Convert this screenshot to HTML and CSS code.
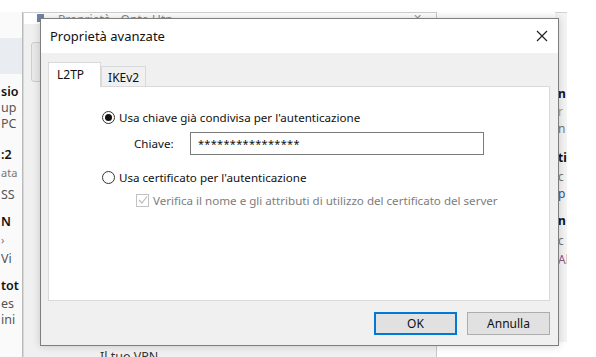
FILE: index.html
```html
<!DOCTYPE html>
<html lang="it">
<head>
    <meta charset="UTF-8">
    <meta name="viewport" content="width=device-width, initial-scale=1.0">
    <title>Proprietà avanzate</title>
    <link rel="stylesheet" href="styles.css">
</head>
<body>
    <div class="desktop">
        <!-- window on the left, mostly hidden -->
        <div class="win-left">
            <div class="left-band"></div>
            <div class="left-text">
                <span class="l-b" style="top: 80px">sio</span>
                <span style="top: 96px">up</span>
                <span style="top: 112px">PC</span>
                <span class="l-b" style="top: 143px">:2</span>
                <span class="l-s" style="top: 161px">ata</span>
                <span style="top: 183px">SS</span>
                <span class="l-b" style="top: 210px">N</span>
                <span class="l-s" style="top: 228px">›</span>
                <span style="top: 247px">Vi</span>
                <span class="l-b" style="top: 274px">tot</span>
                <span style="top: 292px">es</span>
                <span style="top: 308px">ini</span>
            </div>
        </div>

        <!-- window behind the dialog -->
        <div class="win-back">
            <div class="back-title">
                <span class="back-icon"></span>
                <span class="back-name">Proprietà - Onto Utn</span>
                <span class="back-close">✕</span>
            </div>
            <div class="back-tab"></div>
            <div class="back-bottom">Il tuo VPN</div>
        </div>

        <!-- window on the right, mostly hidden -->
        <div class="win-right">
            <span class="r-b" style="top: 81px">n</span>
            <span class="r-y" style="top: 99px">r</span>
            <span style="top: 116px">n</span>
            <span class="r-b" style="top: 145px">ti</span>
            <span style="top: 164px">c</span>
            <span class="r-p" style="top: 181px">p</span>
            <span class="r-b" style="top: 208px">n</span>
            <span style="top: 228px">c</span>
            <span class="r-v" style="top: 247px">Al</span>
        </div>

        <div class="dialog">
            <div class="titlebar">
                <span class="title">Proprietà avanzate</span>
                <span class="close">
                    <svg width="12" height="12" viewBox="0 0 12 12">
                        <path d="M1 1 L11 11 M11 1 L1 11" stroke="#222" stroke-width="1.2" fill="none"/>
                    </svg>
                </span>
            </div>
            <div class="dialog-body">
                <div class="tabs">
                    <div class="tab active">L2TP</div>
                    <div class="tab">IKEv2</div>
                </div>
                <div class="tab-panel">
                    <label class="option">
                        <span class="radio checked"></span>
                        Usa chiave già condivisa per l'autenticazione
                    </label>
                    <div class="key-row">
                        <span class="key-label">Chiave:</span>
                        <div class="key-input">****************</div>
                    </div>
                    <label class="option option-2">
                        <span class="radio"></span>
                        Usa certificato per l'autenticazione
                    </label>
                    <label class="check disabled">
                        <span class="checkbox">
                            <svg width="10" height="10" viewBox="0 0 10 10">
                                <path d="M1 5 L4 8 L9 1.5" stroke="#b5b5b5" stroke-width="1.1" fill="none"/>
                            </svg>
                        </span>
                        Verifica il nome e gli attributi di utilizzo del certificato del server
                    </label>
                </div>
                <div class="buttons">
                    <button class="btn btn-default">OK</button>
                    <button class="btn">Annulla</button>
                </div>
            </div>
        </div>
    </div>
</body>
</html>
```

FILE: styles.css
```css
* {
    box-sizing: border-box;
}
body {
    margin: 0;
    background: #fff;
    font-family: "Noto Sans", "Liberation Sans", sans-serif;
}
.desktop {
    position: relative;
    width: 596px;
    height: 357px;
    overflow: hidden;
    background: #fff;
}

/* left background window */
.win-left {
    position: absolute;
    left: 0;
    top: 12px;
    width: 23px;
    height: 345px;
    background: #fafafa;
    border-right: 1px solid #b9b9b9;
    overflow: hidden;
}
.left-band {
    margin-top: 26px;
    height: 36px;
    background: #e9edf1;
}
.left-text span {
    position: absolute;
    left: 1px;
    font-size: 12.5px;
    line-height: 14px;
    color: #555;
    white-space: nowrap;
    margin-top: -7px;
}
.left-text .l-b {
    color: #111;
    font-weight: 600;
}
.left-text .l-s {
    color: #777;
    font-size: 11px;
}

/* window behind the dialog */
.win-back {
    position: absolute;
    left: 23px;
    top: 12px;
    width: 414px;
    height: 345px;
    background: #f0f0f0;
    border-right: 1px solid #c8c8c8;
    border-left: 1px solid #d8d8d8;
}
.back-title {
    display: flex;
    align-items: flex-start;
    height: 12px;
    padding-left: 13px;
    background: #fff;
    border-top: 1px solid #cfcfcf;
    overflow: hidden;
}
.back-icon {
    width: 7px;
    height: 8px;
    margin-top: 1px;
    background: #6d86a8;
}
.back-name {
    margin-left: 14px;
    font-size: 12px;
    line-height: 14px;
    color: #8a8a8a;
}
.back-close {
    margin-left: auto;
    margin-right: 14px;
    font-size: 11px;
    line-height: 10px;
    color: #999;
}
.back-tab {
    position: absolute;
    left: 7px;
    top: 30px;
    width: 20px;
    height: 40px;
    border: 1px solid #cdcdcd;
    border-radius: 3px;
    background: #e9e9e9;
}
.back-bottom {
    position: absolute;
    left: 76px;
    top: 337px;
    font-size: 12.5px;
    line-height: 16px;
    color: #333;
}

/* right background window */
.win-right {
    position: absolute;
    left: 555px;
    top: 12px;
    width: 12px;
    height: 330px;
    background: #f4f4f4;
    border-top: 1px solid #d3d3d3;
    overflow: hidden;
}
.win-right span {
    position: absolute;
    left: 3px;
    font-size: 12px;
    line-height: 13px;
    color: #777;
    margin-top: -7px;
}
.win-right .r-b {
    color: #111;
    font-weight: 700;
}
.win-right .r-y {
    color: #b9a74a;
}
.win-right .r-p {
    color: #3a4c8c;
}
.win-right .r-v {
    color: #8a5a8e;
}

/* dialog */
.dialog {
    position: absolute;
    left: 40px;
    top: 18px;
    width: 519px;
    height: 328px;
    border: 1px solid #7e7e7e;
    display: flex;
    flex-direction: column;
    box-shadow: 0 0 8px rgba(0, 0, 0, 0.18);
    font-size: 11.6px;
    color: #111;
}
.titlebar {
    height: 34px;
    flex-shrink: 0;
    background: #fff;
    display: flex;
    align-items: center;
    justify-content: space-between;
    padding-left: 9px;
    padding-right: 10px;
}
.title {
    font-size: 13px;
    color: #111;
}
.close {
    display: flex;
}
.dialog-body {
    flex: 1;
    background: #f0f0f0;
    padding: 9px 8px 0 7px;
    display: flex;
    flex-direction: column;
}
.tabs {
    display: flex;
    align-items: flex-end;
    height: 24px;
}
.tab {
    height: 21px;
    padding: 0 6px 0 6px;
    border: 1px solid #d9d9d9;
    border-bottom: none;
    background: #f0f0f0;
    display: flex;
    align-items: center;
    font-size: 12px;
    margin-bottom: -1px;
}
.tab.active {
    height: 25px;
    padding: 0 16px 2px 8px;
    background: #fff;
    position: relative;
    z-index: 1;
}
.tab-panel {
    height: 215px;
    background: #fff;
    border: 1px solid #d9d9d9;
    padding: 23px 0 0 53px;
    display: flex;
    flex-direction: column;
}
.option {
    display: flex;
    align-items: center;
    gap: 4px;
    height: 14px;
}
.radio {
    width: 13px;
    height: 13px;
    border: 1px solid #333;
    border-radius: 50%;
    display: flex;
    align-items: center;
    justify-content: center;
    background: #fff;
}
.radio.checked::after {
    content: "";
    width: 7px;
    height: 7px;
    border-radius: 50%;
    background: #111;
}
.key-row {
    display: flex;
    align-items: center;
    margin-top: 8px;
    padding-left: 32px;
    height: 23px;
}
.key-label {
    width: 56px;
}
.key-input {
    width: 294px;
    height: 23px;
    border: 1px solid #7a7a7a;
    background: #fff;
    padding-left: 7px;
    display: flex;
    align-items: center;
    font-size: 11px;
    letter-spacing: 0.3px;
}
.option-2 {
    margin-top: 15px;
}
.check {
    display: flex;
    align-items: center;
    gap: 4px;
    height: 14px;
    margin-top: 9px;
    padding-left: 34px;
}
.check.disabled {
    color: #7d7d7d;
}
.checkbox {
    width: 13px;
    height: 13px;
    border: 1px solid #c2c2c2;
    display: flex;
    align-items: center;
    justify-content: center;
}
.buttons {
    display: flex;
    justify-content: flex-end;
    gap: 10px;
    margin-top: 11px;
}
.btn {
    width: 83px;
    height: 23px;
    border: 1px solid #adadad;
    background: #e1e1e1;
    font-family: inherit;
    font-size: 12px;
    color: #111;
    padding: 0;
}
.btn-default {
    border: 2px solid #0078d7;
}
```
